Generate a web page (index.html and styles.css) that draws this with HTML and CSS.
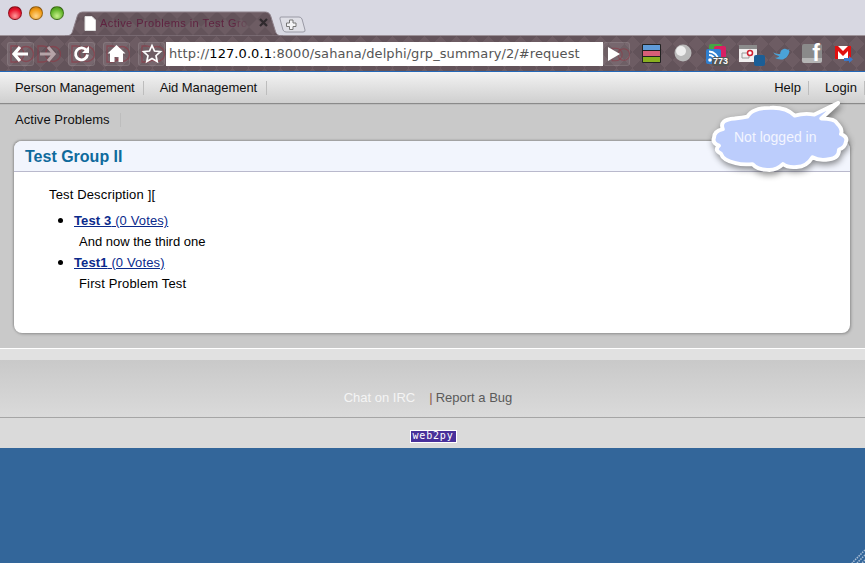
FILE: index.html
```html
<!DOCTYPE html>
<html lang="en">
<head>
<meta charset="utf-8">
<title>Active Problems in Test Group II</title>
<link rel="stylesheet" href="styles.css">
</head>
<body>
<svg class="defs" width="0" height="0">
  <defs>
    <symbol id="ghost" viewBox="0 0 27 24"><path d="M4 4h5a8 8 0 0 1 0 16h-5z" fill="none" stroke="#8d3a46" stroke-width="1.300" opacity=".65"/><circle cx="19" cy="12" r="7.500" fill="none" stroke="#8d3a46" stroke-width="1.300" opacity=".65"/></symbol>
    <pattern id="diamonds" width="16" height="16" patternUnits="userSpaceOnUse"><rect width="16" height="16" fill="#6d5c63"/><path d="M8 0l8 8-8 8-8-8z" fill="#63535a"/></pattern>
  </defs>
</svg>
<header class="chrome">
  <div class="titlebar">
    <div class="lights"><i class="light red"></i><i class="light amber"></i><i class="light green"></i></div>
    <div class="tab">
      <svg class="tab-shape" width="218" height="25" viewBox="0 0 218 25"><path d="M0 25c5 0 7-2 8-6l4-13c1-4 3-5 7-5h180c4 0 6 1 7 5l4 13c1 4 3 6 8 6z" fill="url(#diamonds)" stroke="#8d8089"/></svg>
      <svg class="doc" width="12" height="15" viewBox="0 0 12 15"><path d="M1 .5h7l3.500 3.500v10.500h-10.500z" fill="#fff" stroke="#ddd"/></svg>
      <span class="tab-title">Active Problems in Test Gro</span>
      <svg class="tab-x" width="9" height="9" viewBox="0 0 9 9"><path d="M1 1l7 7M8 1l-7 7" stroke="#302a2e" stroke-width="2.200"/></svg>
    </div>
    <svg class="newtab" width="28" height="17" viewBox="0 0 28 17"><path d="M3 1h18q2 0 3 2l3 11q.5 2-2 2h-17q-2 0-3-2l-3-11q-.5-2 1-2z" fill="#dfdfe6" stroke="#9a9aa5"/><path d="M11.500 4h3.500v3h3v3.500h-3v3h-3.500v-3h-3v-3.500h3z" fill="#f4f4f6" stroke="#777"/></svg>
  </div>
  <div class="toolbar">
    <span class="btn back"><svg width="27" height="24" viewBox="0 0 27 24"><use href="#ghost" width="27" height="24"/><path d="M13 5l-6 7 6 7M7 12h14" fill="none" stroke="#fff" stroke-width="3.200"/></svg></span>
    <span class="btn ghost fwd"><svg width="27" height="24" viewBox="0 0 27 24"><use href="#ghost" width="27" height="24"/><path d="M14 5l6 7-6 7M20 12h-14" fill="none" stroke="#b5a4a8" stroke-width="3.200"/></svg></span>
    <span class="btn"><svg width="27" height="24" viewBox="0 0 27 24"><use href="#ghost" width="27" height="24"/><path d="M18.500 8.500a6 6 0 1 0 1 4" fill="none" stroke="#fff" stroke-width="2.800"/><path d="M21 4v7h-7z" fill="#fff"/></svg></span>
    <span class="btn"><svg width="27" height="24" viewBox="0 0 27 24"><use href="#ghost" width="27" height="24"/><path d="M13.500 3l9 8.500h-2.500v8.500h-4.500v-5h-4v5h-4.500v-8.500h-2.500z" fill="#fff"/></svg></span>
    <span class="btn star"><svg width="27" height="24" viewBox="0 0 27 24"><use href="#ghost" width="27" height="24"/><path d="M14 3.500l2.500 5.500 6 .7-4.500 4 1.200 5.800-5.200-3-5.200 3 1.200-5.800-4.500-4 6-.7z" fill="#6e5d64" stroke="#fff" stroke-width="1.700"/></svg></span>
    <div class="url"><span class="dim">http://</span><span class="host">127.0.0.1</span><span class="dim">:8000/sahana/delphi/grp_summary/2/#request</span></div>
    <span class="btn play"><svg width="27" height="24" viewBox="0 0 27 24"><use href="#ghost" x="6" width="21" height="19" y="3"/><path d="M5 5l12 7-12 7z" fill="#fff"/></svg></span>
    <svg class="ext stripes" width="19" height="19" viewBox="0 0 19 19"><rect width="19" height="19" rx="1" fill="#222"/><rect x="1" y="1" width="17" height="5" fill="#5f9bd8"/><rect x="1" y="7" width="17" height="5" fill="#d85f78"/><rect x="1" y="13" width="17" height="5" fill="#8ab020"/></svg>
    <svg class="ext globe" width="18" height="18" viewBox="0 0 18 18"><circle cx="9" cy="9" r="8.500" fill="#b9b9b9"/><circle cx="7" cy="7" r="5" fill="#eee"/></svg>
    <span class="ext rss"><svg width="23" height="22" viewBox="0 0 23 22"><rect x="3" y="0" width="13" height="9" rx="2" fill="#45a545"/><rect x="8" y="2" width="12" height="14" rx="2" fill="#d81f63"/><rect x="0" y="5" width="15" height="15" rx="2" fill="#2f7fd0"/><circle cx="4" cy="16" r="1.800" fill="#fff"/><path d="M3 11a6 6 0 0 1 6 6M3 7.500a9.500 9.500 0 0 1 9.500 9.500" fill="none" stroke="#fff" stroke-width="1.800"/></svg><b class="count">773</b></span>
    <svg class="ext cal" width="26" height="21" viewBox="0 0 26 21"><rect y="0" width="18" height="5" fill="#8c8c8c"/><rect y="4" width="18" height="13" fill="#f2f0f0"/><path d="M3 8h7v5h-7z" fill="none" stroke="#999"/><circle cx="11" cy="8" r="2.500" fill="#fff" stroke="#d02030" stroke-width="1.500"/><rect x="15" y="10" width="11" height="11" rx="2" fill="#1b5e96"/></svg>
    <svg class="ext bird" width="18" height="12" viewBox="0 0 20 14"><path d="M1 5c3 2 5 2 8 2 0-3 2-6 6-6 1 0 2 1 3 1l2-.5-1 2 1 0c-1 5-4 10-10 10-3 0-5-1-7-2 2 0 4-1 5-2-3-1-6-2-7-4.500z" fill="#4aa3d8"/></svg>
    <span class="ext fb"><span class="fb-f">f</span></span>
    <svg class="ext gmail" width="18" height="17" viewBox="0 0 18 17"><rect y="0" width="16" height="13" fill="#fff"/><path d="M0 0h3l5 5 5-5h3v13h-3v-8l-5 5-5-5v8h-3z" fill="#e01010"/><path d="M9 12h5v-2l4 3.500-4 3.500v-2h-5z" fill="#3a78c8"/></svg>
  </div>
</header>
<nav class="mainnav">
  <ul class="menu">
    <li>Person Management</li>
    <li>Aid Management</li>
  </ul>
  <ul class="menu right">
    <li>Help</li>
    <li>Login</li>
  </ul>
</nav>
<main class="content">
  <ul class="menu sub"><li>Active Problems</li></ul>
  <section class="card">
    <h1 class="card-title">Test Group II</h1>
    <div class="card-body">
      <p class="desc">Test Description ][</p>
      <ul class="problems">
        <li><a href="#"><b>Test 3</b> (0 Votes)</a><p>And now the third one</p></li>
        <li><a href="#"><b>Test1</b> (0 Votes)</a><p class="wide">First Problem Test</p></li>
      </ul>
    </div>
  </section>
  <div class="bubble">
    <svg width="142" height="79" viewBox="0 0 142 79">
      <path class="cloud" transform="translate(1 2) scale(.985 .97)" d="M3 37Q3 30 12 28Q8 18 24 17Q32 16 37 15Q42 6 60 6Q76 5 85 14Q95 11 105 13L129 1L112 17Q126 17 128 22Q134 28 132 33Q139 36 137 41Q136 47 130 49Q130 58 120 59Q110 61 103 57Q97 67 87 67Q78 68 73 64Q66 71 57 70Q47 70 42 64Q32 65 25 63Q12 60 10 53Q3 50 8 45Q1 42 3 37Z"/>
    </svg>
    <span class="bubble-text">Not logged in</span>
  </div>
</main>
<footer class="footer">
  <div class="strip"></div>
  <div class="links"><span class="chat">Chat on IRC</span><span class="sep">|</span><span class="bug">Report a Bug</span></div>
  <div class="powered"><span class="web2py">web2py</span></div>
</footer>
<div class="desktop">
  <svg class="grip" width="14" height="14" viewBox="0 0 14 14"><path d="M14 1l-13 13M14 6l-8 8M14 11l-3 3" stroke="#a9bdd4" stroke-width="1.500" stroke-dasharray="1.500 1"/></svg>
</div>
</body>
</html>
```
FILE: styles.css
```css
* { box-sizing: border-box; }
html, body { margin: 0; height: 563px; overflow: hidden; }
body { width: 865px; font-family: "Liberation Sans", Arial, sans-serif; font-size: 13px; color: #000; background: #33669a; }
ul { list-style: none; margin: 0; padding: 0; }
p { margin: 0; }
.defs { position: absolute; }

.titlebar { height: 36px; background: #d8d8e2; display: flex; border-bottom: 1px solid #9c9298; }
.lights { display: flex; gap: 7px; padding: 6px 0 0 8px; width: 69px; flex: none; }
.light { width: 14px; height: 14px; border-radius: 50%; border: 1px solid rgba(0,0,0,.35); }
.red { background: radial-gradient(circle at 50% 75%, #ff9a9a, #e8122a 60%, #9a0a18); }
.amber { background: radial-gradient(circle at 50% 75%, #ffd68a, #f09a14 60%, #b0660a); }
.green { background: radial-gradient(circle at 50% 75%, #c8f08a, #62b52a 60%, #3d8012); }
.tab { position: relative; width: 210px; height: 25px; margin-top: 11px; flex: none; }
.tab-shape { position: absolute; left: -4px; top: 0; }
.doc { position: absolute; left: 15px; top: 5px; }
.tab-title { position: absolute; left: 31px; top: 5px; width: 150px; overflow: hidden; white-space: nowrap; font-size: 11px; line-height: 14px; letter-spacing: .45px; color: #5f2340; -webkit-mask-image: linear-gradient(90deg, #000 88%, transparent); mask-image: linear-gradient(90deg, #000 88%, transparent); }
.tab-x { position: absolute; left: 190px; top: 7px; }
.newtab { margin: 16px 0 0 -1px; }

.toolbar { height: 35px; display: flex; align-items: center; padding: 1px 0 0 7px; background-color: #6d5c63;
  background-image: linear-gradient(45deg, #63535a 25%, transparent 25%), linear-gradient(-45deg, #63535a 25%, transparent 25%), linear-gradient(135deg, #63535a 25%, transparent 25%), linear-gradient(-135deg, #63535a 25%, transparent 25%);
  background-size: 16px 16px; }
.btn { width: 27px; height: 24px; display: block; flex: none; margin-right: 8px; border-radius: 3px; background: rgba(255,255,255,.07); box-shadow: inset 0 0 0 1px rgba(255,255,255,.1); }
.btn svg { display: block; }
.back { margin-right: 0; }
.ghost { margin-right: 7px; background: none; box-shadow: none; }
.star { margin-right: 1px; }
.url { width: 437px; height: 24px; flex: none; background: #fff; font-family: "DejaVu Sans", sans-serif; font-size: 13px; line-height: 24px; padding-left: 3px; white-space: nowrap; overflow: hidden; letter-spacing: .07px; }
.dim { color: #555; }
.host { color: #000; }
.play { margin: 0; }
.ext { display: block; flex: none; }
.stripes { margin: -2px 0 0 12px; }
.globe { margin: -2px 0 0 13px; }
.rss { position: relative; width: 23px; height: 22px; margin: 1px 0 0 14px; }
.rss svg { display: block; }
.count { position: absolute; left: 6px; top: 13px; width: 17px; height: 9px; border-radius: 2px; background: #555; color: #fff; font-size: 9px; line-height: 9px; text-align: center; }
.cal { margin: 3px 0 0 10px; }
.bird { margin: -1px 0 0 7px; }
.fb { width: 20px; height: 19px; margin: -2px 0 0 12px; border-radius: 2px; background: linear-gradient(#8a8a8a 76%, #b5b5b5 76%); position: relative; }
.fb-f { position: absolute; right: 2px; bottom: -2px; font-size: 23px; line-height: 23px; font-weight: bold; color: #fff; }
.gmail { margin: 1px 0 0 13px; }

.mainnav { height: 33px; display: flex; justify-content: space-between; border-top: 1px solid #2468b8; border-bottom: 1px solid #8a8a8a; background: linear-gradient(#f3f3f3, #cfcfcf); }
.menu { display: flex; }
.menu li { height: 14px; line-height: 14px; margin-top: 9px; padding: 0 8px 0 15px; border-right: 1px solid #bdbdbd; color: #111; letter-spacing: -.06px; }
.menu li + li { padding: 0 9px 0 16px; }
.menu.right li { padding: 0 7px 0 16px; letter-spacing: .03px; }

.content { height: 244px; background: #c9c9c9; position: relative; border-top: 1px solid #bcbcbc; }
.menu.sub li { margin-top: 8px; padding-right: 10px; letter-spacing: .05px; }
.card { position: absolute; left: 14px; top: 36px; width: 836px; height: 192px; background: #fff; border-radius: 8px; box-shadow: -1px -1px 2px #999, 1px 1px 3px #8c8c8c; overflow: hidden; }
.card-title { margin: 0; height: 31px; background: #f2f5fd; border-bottom: 1px solid #b9b9cc; color: #0f6a9c; font-size: 16px; line-height: 31px; font-weight: bold; padding-left: 11px; }
.card-body { padding: 15px 0 0 35px; }
.desc { line-height: 16px; letter-spacing: .15px; }
.problems { margin-top: 6px; list-style: disc; padding-left: 25px; }
.problems li { line-height: 21px; height: 21px; margin-bottom: 21px; }
.problems li:last-child { margin-bottom: 0; }
.problems li::marker { font-size: 15px; }
.problems a { color: #0a2a8c; text-decoration: underline; letter-spacing: .13px; }
.problems p { padding-left: 5px; }
.problems .wide { letter-spacing: .15px; }

.bubble { position: absolute; left: 710px; top: -5px; width: 142px; height: 79px; }
.bubble svg { display: block; filter: drop-shadow(1px 3px 3px rgba(0,0,0,.45)); }
.cloud { fill: #bccdfc; stroke: #fff; stroke-width: 4; stroke-linejoin: round; }
.bubble-text { position: absolute; left: 24px; top: 29px; color: #f3f5ff; font-size: 14px; line-height: 16px; white-space: nowrap; }

.footer { height: 100px; display: flex; flex-direction: column; }
.strip { height: 12px; flex: none; border-top: 1px solid #fff; background: #e1e1e1; }
.links { height: 58px; flex: none; text-align: center; padding: 30px 9px 0 0; font-size: 13px; line-height: 16px; background: linear-gradient(#c9c9c9, #dadada); border-bottom: 1px solid #a5a5a5; }
.chat { color: #f4f4f4; }
.sep { color: #8a5a4a; margin-left: 14px; margin-right: 3px; }
.bug { color: #5a5a5a; }
.powered { flex: 1; background: #dadada; display: flex; justify-content: center; align-items: flex-start; padding: 12px 0 0 1px; }
.web2py { width: 47px; height: 13px; background: #48309a; border: 1px solid #fff; color: #fff; font-family: "DejaVu Sans Mono", monospace; font-size: 10px; line-height: 10px; letter-spacing: .8px; text-align: center; white-space: nowrap; }

.desktop { height: 115px; background: #33669a; position: relative; }
.grip { position: absolute; right: 0; bottom: 0; }
```
